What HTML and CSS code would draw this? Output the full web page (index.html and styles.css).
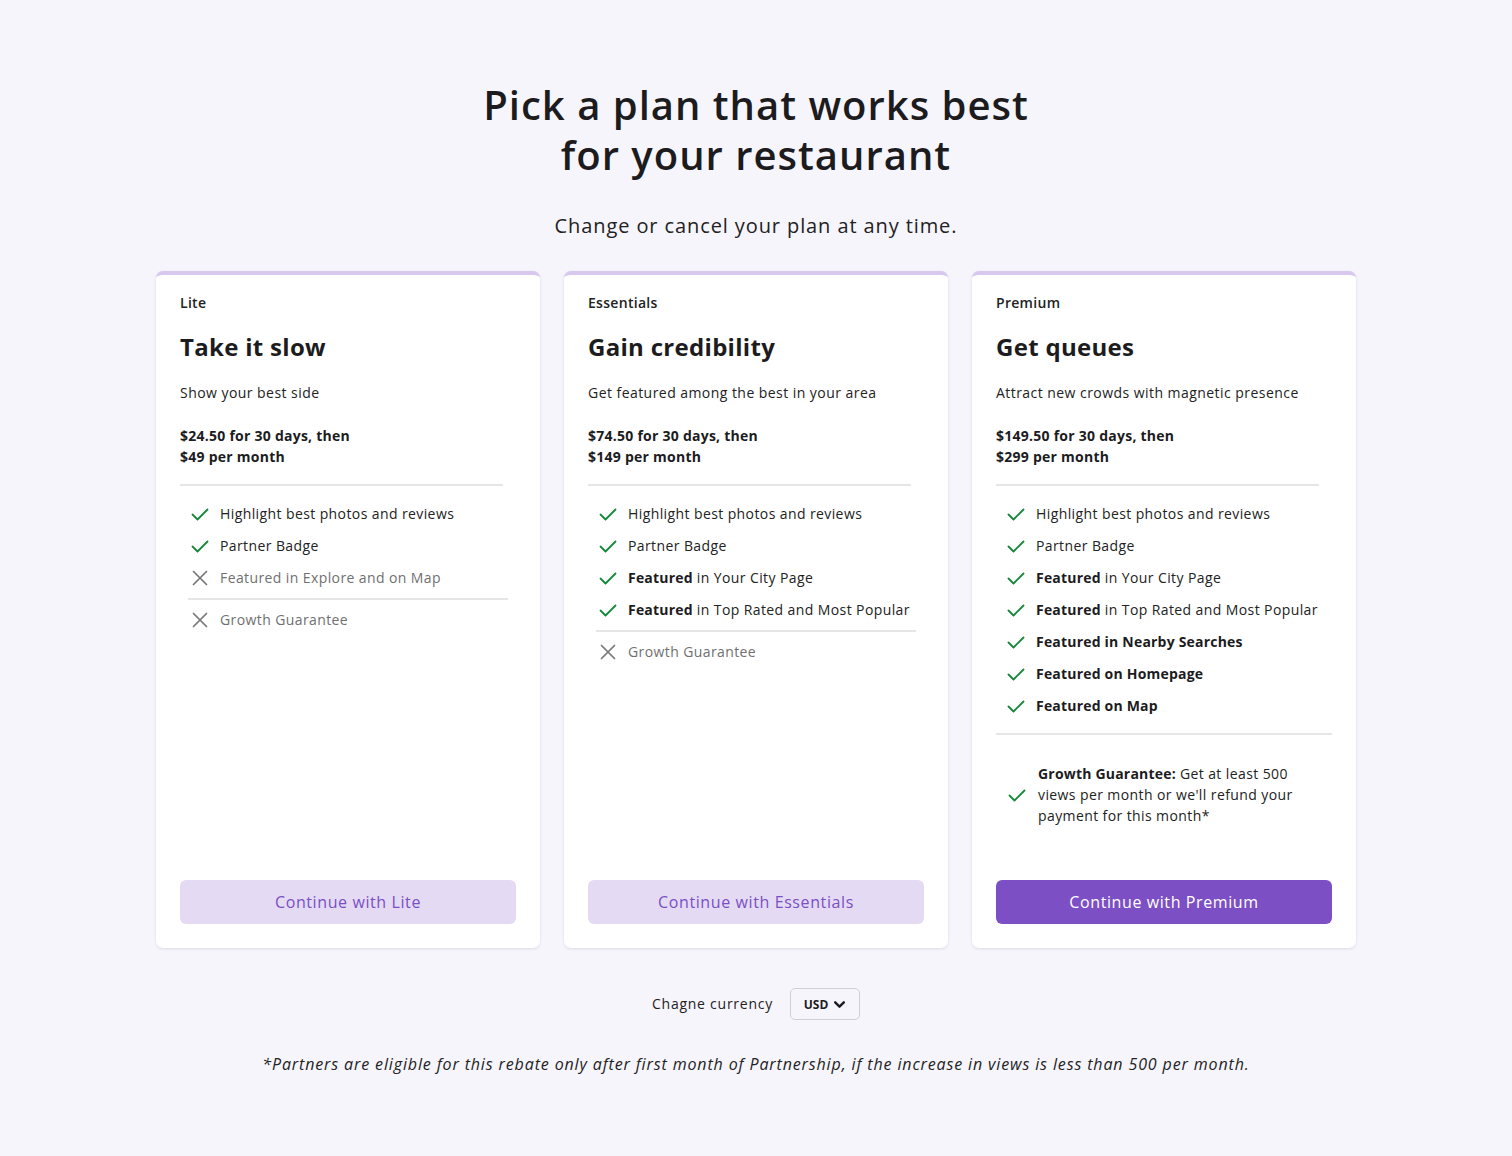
FILE: index.html
```html
<!DOCTYPE html>
<html lang="en">
<head>
<meta charset="utf-8">
<title>Pick a plan</title>
<link rel="stylesheet" href="styles.css">
</head>
<body>
<main class="page">
  <h1 class="headline">Pick a plan that works best<br>for your restaurant</h1>
  <p class="subhead">Change or cancel your plan at any time.</p>

  <section class="plans">
    <article class="card">
      <div class="tier">Lite</div>
      <h2 class="card-title">Take it slow</h2>
      <p class="card-desc">Show your best side</p>
      <p class="price">$24.50 for 30 days, then<br>$49 per month</p>
      <hr class="rule rule-a">
      <ul class="features">
        <li class="feat"><svg class="ico" viewBox="0 0 20 20"><polyline points="2.5,10.5 7.5,15.5 17.5,5.5" class="chk"/></svg><span>Highlight best photos and reviews</span></li>
        <li class="feat"><svg class="ico" viewBox="0 0 20 20"><polyline points="2.5,10.5 7.5,15.5 17.5,5.5" class="chk"/></svg><span>Partner Badge</span></li>
        <li class="feat off"><svg class="ico" viewBox="0 0 20 20"><path d="M3.5 3.5 L16.5 16.5 M16.5 3.5 L3.5 16.5" class="xx"/></svg><span>Featured in Explore and on Map</span></li>
      </ul>
      <hr class="rule rule-b">
      <ul class="features tight">
        <li class="feat off"><svg class="ico" viewBox="0 0 20 20"><path d="M3.5 3.5 L16.5 16.5 M16.5 3.5 L3.5 16.5" class="xx"/></svg><span>Growth Guarantee</span></li>
      </ul>
      <button class="btn btn-soft">Continue with Lite</button>
    </article>

    <article class="card">
      <div class="tier">Essentials</div>
      <h2 class="card-title">Gain credibility</h2>
      <p class="card-desc">Get featured among the best in your area</p>
      <p class="price">$74.50 for 30 days, then<br>$149 per month</p>
      <hr class="rule rule-a">
      <ul class="features">
        <li class="feat"><svg class="ico" viewBox="0 0 20 20"><polyline points="2.5,10.5 7.5,15.5 17.5,5.5" class="chk"/></svg><span>Highlight best photos and reviews</span></li>
        <li class="feat"><svg class="ico" viewBox="0 0 20 20"><polyline points="2.5,10.5 7.5,15.5 17.5,5.5" class="chk"/></svg><span>Partner Badge</span></li>
        <li class="feat"><svg class="ico" viewBox="0 0 20 20"><polyline points="2.5,10.5 7.5,15.5 17.5,5.5" class="chk"/></svg><span><b>Featured</b> in Your City Page</span></li>
        <li class="feat"><svg class="ico" viewBox="0 0 20 20"><polyline points="2.5,10.5 7.5,15.5 17.5,5.5" class="chk"/></svg><span><b>Featured</b> in Top Rated and Most Popular</span></li>
      </ul>
      <hr class="rule rule-b">
      <ul class="features tight">
        <li class="feat off"><svg class="ico" viewBox="0 0 20 20"><path d="M3.5 3.5 L16.5 16.5 M16.5 3.5 L3.5 16.5" class="xx"/></svg><span>Growth Guarantee</span></li>
      </ul>
      <button class="btn btn-soft">Continue with Essentials</button>
    </article>

    <article class="card">
      <div class="tier">Premium</div>
      <h2 class="card-title">Get queues</h2>
      <p class="card-desc">Attract new crowds with magnetic presence</p>
      <p class="price">$149.50 for 30 days, then<br>$299 per month</p>
      <hr class="rule rule-a">
      <ul class="features">
        <li class="feat"><svg class="ico" viewBox="0 0 20 20"><polyline points="2.5,10.5 7.5,15.5 17.5,5.5" class="chk"/></svg><span>Highlight best photos and reviews</span></li>
        <li class="feat"><svg class="ico" viewBox="0 0 20 20"><polyline points="2.5,10.5 7.5,15.5 17.5,5.5" class="chk"/></svg><span>Partner Badge</span></li>
        <li class="feat"><svg class="ico" viewBox="0 0 20 20"><polyline points="2.5,10.5 7.5,15.5 17.5,5.5" class="chk"/></svg><span><b>Featured</b> in Your City Page</span></li>
        <li class="feat"><svg class="ico" viewBox="0 0 20 20"><polyline points="2.5,10.5 7.5,15.5 17.5,5.5" class="chk"/></svg><span><b>Featured</b> in Top Rated and Most Popular</span></li>
        <li class="feat"><svg class="ico" viewBox="0 0 20 20"><polyline points="2.5,10.5 7.5,15.5 17.5,5.5" class="chk"/></svg><span><b>Featured in Nearby Searches</b></span></li>
        <li class="feat"><svg class="ico" viewBox="0 0 20 20"><polyline points="2.5,10.5 7.5,15.5 17.5,5.5" class="chk"/></svg><span><b>Featured on Homepage</b></span></li>
        <li class="feat"><svg class="ico" viewBox="0 0 20 20"><polyline points="2.5,10.5 7.5,15.5 17.5,5.5" class="chk"/></svg><span><b>Featured on Map</b></span></li>
      </ul>
      <hr class="rule rule-c">
      <div class="guarantee">
        <svg class="ico" viewBox="0 0 20 20"><polyline points="2.5,10.5 7.5,15.5 17.5,5.5" class="chk"/></svg>
        <p class="guarantee-text"><b>Growth Guarantee:</b> Get at least 500<br>views per month or we'll refund your<br>payment for this month*</p>
      </div>
      <button class="btn btn-solid">Continue with Premium</button>
    </article>
  </section>

  <div class="currency">
    <span class="currency-label">Chagne currency</span>
    <button class="currency-select">USD <svg class="chev" viewBox="0 0 12 12"><polyline points="2,4 6,8 10,4"/></svg></button>
  </div>

  <p class="footnote">*Partners are eligible for this rebate only after first month of Partnership, if the increase in views is less than 500 per month.</p>
</main>
</body>
</html>
```

FILE: styles.css
```css
* { box-sizing: border-box; }

html, body {
  margin: 0;
  padding: 0;
  background: #f7f5fc;
}

body {
  font-family: "Open Sans", "Noto Sans", sans-serif;
  color: #1d1d1f;
}

.page {
  width: 1200px;
  margin: 0 auto;
  padding: 80px 0 60px;
  display: flex;
  flex-direction: column;
  align-items: center;
}

.headline {
  margin: 0;
  font-size: 40px;
  line-height: 50px;
  font-weight: 600;
  text-align: center;
  color: #1c1c1e;
  letter-spacing: 1px;
}

.subhead {
  margin: 32px 0 0;
  font-size: 20px;
  line-height: 28px;
  color: #222;
  letter-spacing: 0.9px;
}

.plans {
  margin-top: 31px;
  width: 100%;
  display: grid;
  grid-template-columns: repeat(3, 1fr);
  gap: 24px;
}

.card {
  background: #fff;
  border-top: 4px solid #d8c8ef;
  border-radius: 7px;
  box-shadow: 0 1px 3px rgba(40, 20, 80, 0.12);
  padding: 18px 24px 24px;
  display: flex;
  flex-direction: column;
}

.tier {
  font-size: 14px;
  line-height: 20px;
  font-weight: 600;
  color: #222;
  letter-spacing: 0.3px;
}

.card-title {
  margin: 18px 0 0;
  font-size: 24px;
  line-height: 32px;
  font-weight: 700;
  color: #1c1c1e;
  letter-spacing: 0.3px;
}

.card-desc {
  margin: 20px 0 0;
  font-size: 14px;
  line-height: 20px;
  color: #222;
  letter-spacing: 0.45px;
}

.price {
  margin: 22px 0 0;
  font-size: 14px;
  line-height: 21px;
  font-weight: 700;
  color: #1c1c1e;
  letter-spacing: 0.25px;
}

.rule {
  border: 0;
  height: 2px;
  background: #e6e6e8;
  margin: 0;
}

.rule-a { margin: 17px 13px 0 0; }
.rule-b { margin: 10px 8px 0 8px; }
.rule-c { margin: 17px 0 0 0; }

.features {
  list-style: none;
  margin: 18px 0 0;
  padding: 0;
  display: flex;
  flex-direction: column;
  gap: 12px;
}

.features.tight { margin-top: 10px; }

.feat {
  display: flex;
  align-items: center;
  gap: 10px;
  font-size: 14px;
  line-height: 20px;
  color: #222;
  padding-left: 10px;
  letter-spacing: 0.4px;
}

.feat b { font-weight: 700; color: #1c1c1e; letter-spacing: 0.2px; }

.feat.off { color: #707070; }

.ico {
  width: 20px;
  height: 20px;
  flex: none;
}

.chk {
  fill: none;
  stroke: #16883a;
  stroke-width: 1.8;
  stroke-linecap: round;
  stroke-linejoin: round;
}

.xx {
  fill: none;
  stroke: #777;
  stroke-width: 1.7;
  stroke-linecap: round;
}

.guarantee {
  margin-top: 28px;
  margin-bottom: 54px;
  display: flex;
  align-items: center;
  gap: 11px;
  padding-left: 11px;
}

.guarantee-text {
  margin: 0;
  font-size: 14px;
  line-height: 21px;
  color: #222;
  letter-spacing: 0.4px;
}

.guarantee-text b { font-weight: 700; color: #1c1c1e; letter-spacing: 0.2px; }

.btn {
  margin-top: auto;
  height: 44px;
  border: 0;
  border-radius: 6px;
  font-family: inherit;
  font-size: 16px;
  font-weight: 500;
  letter-spacing: 0.6px;
  cursor: pointer;
}

.btn-soft {
  background: #e4daf3;
  color: #7a4fc4;
}

.btn-solid {
  background: #7d4fc4;
  color: #fff;
}

.currency {
  margin-top: 40px;
  display: flex;
  align-items: center;
  gap: 17px;
}

.currency-label {
  font-size: 14px;
  line-height: 20px;
  color: #222;
  letter-spacing: 0.75px;
}

.currency-select {
  height: 32px;
  width: 70px;
  border: 1px solid #cfcfd4;
  border-radius: 5px;
  background: #f7f5fc;
  font-family: inherit;
  font-size: 12px;
  font-weight: 700;
  color: #1c1c1e;
  display: flex;
  align-items: center;
  justify-content: center;
  gap: 5px;
  padding: 0;
}

.chev {
  width: 13px;
  height: 13px;
  fill: none;
  stroke: #1c1c1e;
  stroke-width: 2.2;
  stroke-linecap: round;
  stroke-linejoin: round;
}

.footnote {
  margin: 32px 0 0;
  font-size: 16px;
  line-height: 24px;
  font-style: italic;
  color: #222;
  text-align: center;
  letter-spacing: 0.87px;
}
```
